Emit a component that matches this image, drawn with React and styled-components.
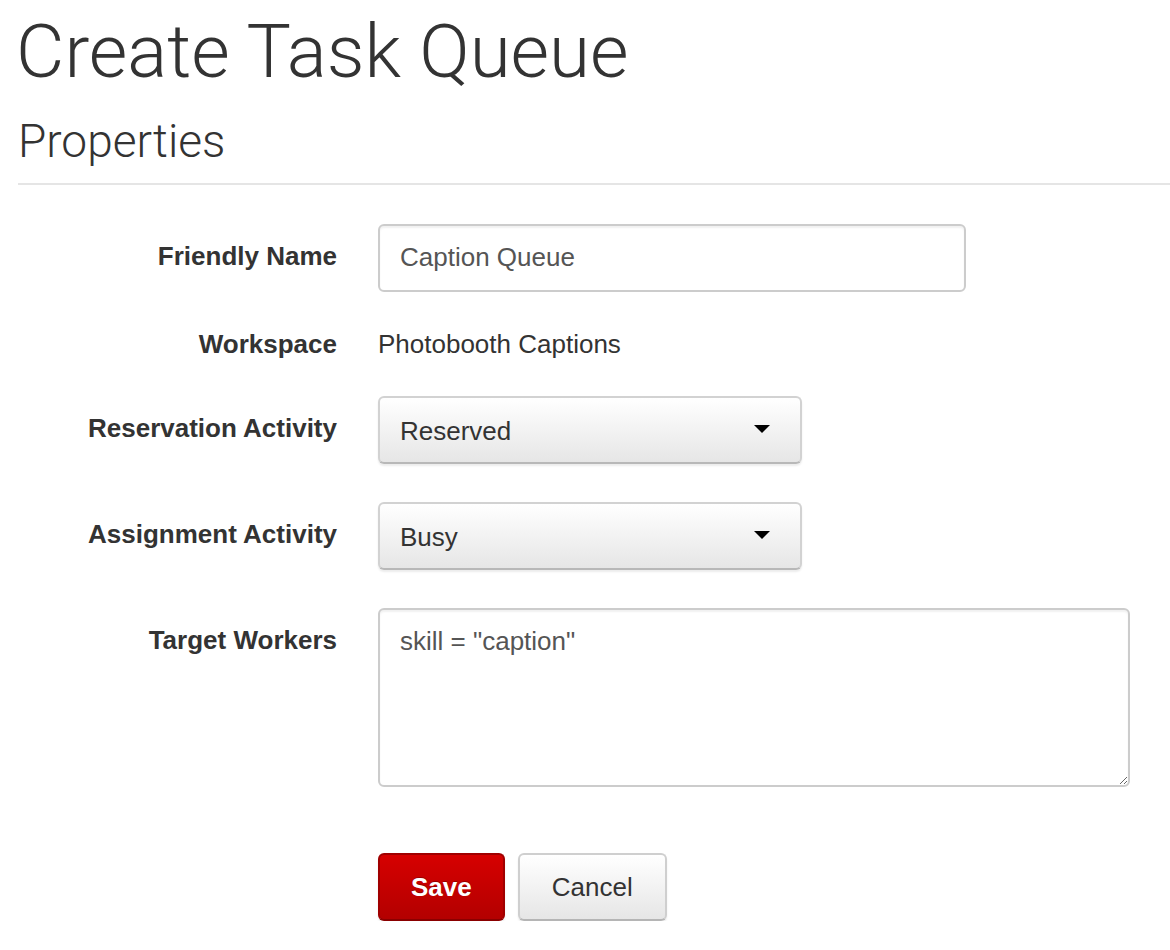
import React from "react";
import styled, { createGlobalStyle } from "styled-components";

const Global = createGlobalStyle`
  html, body {
    margin: 0;
    padding: 0;
    background: #fff;
  }
  body {
    font-family: "Liberation Sans", Arial, sans-serif;
    color: #333;
  }
`;

const Page = styled.div`
  padding: 0 0 0 18px;
`;

const Title = styled.h1`
  font-family: Roboto, "Liberation Sans", sans-serif;
  font-weight: 300;
  font-size: 74.5px;
  line-height: 90px;
  margin: 7px 0 0 -2px;
  color: #333;
`;

const Legend = styled.h2`
  font-family: Roboto, "Liberation Sans", sans-serif;
  font-weight: 300;
  font-size: 46px;
  line-height: 60px;
  margin: 14px 0 0 0;
  padding-bottom: 12px;
  border-bottom: 2px solid #e5e5e5;
  color: #333;
`;

const Form = styled.form`
  display: flex;
  flex-direction: column;
  gap: 38px;
  padding-top: 39px;
`;

const Row = styled.div`
  display: grid;
  grid-template-columns: 319px 1fr;
  column-gap: 41px;
  align-items: start;
`;

const Label = styled.label`
  text-align: right;
  font-weight: bold;
  font-size: 26px;
  line-height: 28px;
  padding-top: ${(p) => p.$top ?? 18}px;
  color: #333;
`;

const TextInput = styled.input`
  box-sizing: border-box;
  width: 588px;
  height: 68px;
  border: 2px solid #ccc;
  border-radius: 6px;
  padding: 0 20px 2px;
  font-family: "Liberation Sans", Arial, sans-serif;
  font-size: 26px;
  color: #555;
  box-shadow: inset 0 2px 2px rgba(0, 0, 0, 0.06);
  outline: none;
`;

const Value = styled.div`
  font-size: 26px;
  line-height: 28px;
  color: #333;
`;

const Select = styled.div`
  box-sizing: border-box;
  width: 424px;
  height: 68px;
  display: flex;
  align-items: center;
  justify-content: space-between;
  padding: 2px 30px 0 20px;
  border: 2px solid #d2d2d2;
  border-bottom-color: #b8b8b8;
  border-radius: 6px;
  background: linear-gradient(to bottom, #ffffff, #e6e6e6);
  box-shadow: 0 2px 2px rgba(0, 0, 0, 0.08);
  font-size: 26px;
  color: #333;
`;

const Caret = styled.span`
  width: 0;
  height: 0;
  border-left: 8px solid transparent;
  border-right: 8px solid transparent;
  border-top: 8px solid #000;
  margin-bottom: 4px;
`;

const TextArea = styled.textarea`
  box-sizing: border-box;
  width: 752px;
  height: 179px;
  border: 2px solid #ccc;
  border-radius: 6px;
  padding: 15px 20px;
  font-family: "Liberation Sans", Arial, sans-serif;
  font-size: 26px;
  line-height: 32px;
  color: #555;
  box-shadow: inset 0 2px 2px rgba(0, 0, 0, 0.06);
  outline: none;
`;

const Actions = styled.div`
  display: flex;
  gap: 13px;
  padding: 66px 0 0 360px;
`;

const Button = styled.button`
  box-sizing: border-box;
  height: 68px;
  padding: 0 ${(p) => (p.$primary ? 31 : 32)}px;
  border-radius: 6px;
  font-family: "Liberation Sans", Arial, sans-serif;
  font-size: 26px;
  font-weight: ${(p) => (p.$primary ? "bold" : "normal")};
  color: ${(p) => (p.$primary ? "#fff" : "#333")};
  border: 2px solid ${(p) => (p.$primary ? "#a00000" : "#cfcfcf")};
  border-bottom-color: ${(p) => (p.$primary ? "#8a0000" : "#b5b5b5")};
  background: ${(p) =>
    p.$primary
      ? "linear-gradient(to bottom, #d60000, #b30000)"
      : "linear-gradient(to bottom, #ffffff, #e6e6e6)"};
  box-shadow: 0 2px 2px rgba(0, 0, 0, 0.08);
  text-shadow: ${(p) => (p.$primary ? "0 -1px 0 rgba(0,0,0,0.25)" : "none")};
`;

export default function App() {
  return (
    <Page>
      <Global />
      <Title>Create Task Queue</Title>
      <Legend>Properties</Legend>
      <Form onSubmit={(e) => e.preventDefault()}>
        <Row>
          <Label>Friendly Name</Label>
          <TextInput readOnly defaultValue="Caption Queue" />
        </Row>
        <Row>
          <Label $top={0}>Workspace</Label>
          <Value>Photobooth Captions</Value>
        </Row>
        <Row>
          <Label>Reservation Activity</Label>
          <Select>
            <span>Reserved</span>
            <Caret />
          </Select>
        </Row>
        <Row>
          <Label>Assignment Activity</Label>
          <Select>
            <span>Busy</span>
            <Caret />
          </Select>
        </Row>
        <Row>
          <Label>Target Workers</Label>
          <TextArea readOnly defaultValue={'skill = "caption"'} />
        </Row>
      </Form>
      <Actions>
        <Button $primary>Save</Button>
        <Button>Cancel</Button>
      </Actions>
    </Page>
  );
}
